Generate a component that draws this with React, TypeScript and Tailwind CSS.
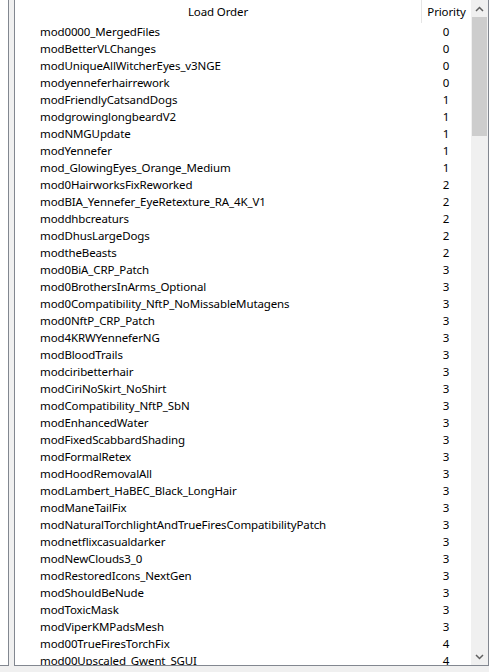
const mods: [string, number][] = [
  ['mod0000_MergedFiles', 0],
  ['modBetterVLChanges', 0],
  ['modUniqueAllWitcherEyes_v3NGE', 0],
  ['modyenneferhairrework', 0],
  ['modFriendlyCatsandDogs', 1],
  ['modgrowinglongbeardV2', 1],
  ['modNMGUpdate', 1],
  ['modYennefer', 1],
  ['mod_GlowingEyes_Orange_Medium', 1],
  ['mod0HairworksFixReworked', 2],
  ['modBIA_Yennefer_EyeRetexture_RA_4K_V1', 2],
  ['moddhbcreaturs', 2],
  ['modDhusLargeDogs', 2],
  ['modtheBeasts', 2],
  ['mod0BiA_CRP_Patch', 3],
  ['mod0BrothersInArms_Optional', 3],
  ['mod0Compatibility_NftP_NoMissableMutagens', 3],
  ['mod0NftP_CRP_Patch', 3],
  ['mod4KRWYenneferNG', 3],
  ['modBloodTrails', 3],
  ['modciribetterhair', 3],
  ['modCiriNoSkirt_NoShirt', 3],
  ['modCompatibility_NftP_SbN', 3],
  ['modEnhancedWater', 3],
  ['modFixedScabbardShading', 3],
  ['modFormalRetex', 3],
  ['modHoodRemovalAll', 3],
  ['modLambert_HaBEC_Black_LongHair', 3],
  ['modManeTailFix', 3],
  ['modNaturalTorchlightAndTrueFiresCompatibilityPatch', 3],
  ['modnetflixcasualdarker', 3],
  ['modNewClouds3_0', 3],
  ['modRestoredIcons_NextGen', 3],
  ['modShouldBeNude', 3],
  ['modToxicMask', 3],
  ['modViperKMPadsMesh', 3],
  ['mod00TrueFiresTorchFix', 4],
  ['mod00Upscaled_Gwent_SGUI', 4]
];

const Chevron = ({ down }: { down?: boolean }) => (
  <svg width="9" height="6" viewBox="0 0 9 6" className={down ? 'rotate-180' : ''}>
    <path d="M1 5 L4.5 1.5 L8 5" fill="none" stroke="#606060" strokeWidth="1.5" />
  </svg>
);

const App = () => {
  return (
    <div
      className="flex h-[672px] w-[489px] overflow-hidden bg-[#f0f0f0] text-[11.5px] tracking-[-0.12px] text-black"
      style={{ fontFamily: '"Noto Sans", "Liberation Sans", sans-serif' }}
    >
      <div className="h-[666px] w-[9px] shrink-0 border-r border-b border-[#828790] bg-white" />

      <div className="ml-[5px] flex h-[666px] flex-1 overflow-hidden border-x border-b border-[#828790] bg-white">
        <div className="flex flex-1 flex-col overflow-hidden">
          <div className="flex h-[23px] shrink-0 items-center">
            <div className="flex-1 text-center">Load Order</div>
            <div className="h-full w-px bg-[#e5e5e5]" />
            <div className="w-[49px] text-center">Priority</div>
          </div>

          {mods.map(([name, priority]) => (
            <div className="flex h-[17px] shrink-0 items-center leading-[17px]" key={name}>
              <div className="flex-1 truncate pl-[25px]">{name}</div>
              <div className="w-[50px] text-center">{priority}</div>
            </div>
          ))}
        </div>

        <div className="flex w-[17px] shrink-0 flex-col bg-[#f0f0f0]">
          <div className="flex h-[17px] items-center justify-center">
            <Chevron />
          </div>
          <div className="ml-px h-[119px] w-[15px] bg-[#cdcdcd]" />
          <div className="flex-1" />
          <div className="flex h-[17px] items-center justify-center">
            <Chevron down />
          </div>
        </div>
      </div>
    </div>
  );
};

export default App;
